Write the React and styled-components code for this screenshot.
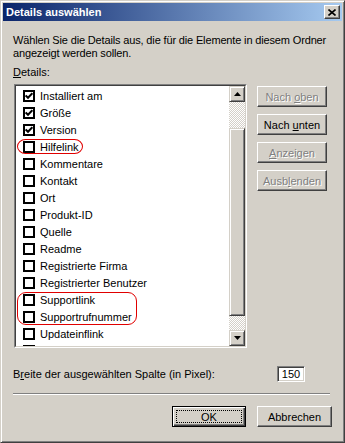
import React from 'react';
import styled, { createGlobalStyle, css } from 'styled-components';

const Global = createGlobalStyle`
  html, body { margin: 0; padding: 0; background: #D4D0C8; }
  body { font-family: "Liberation Sans", Arial, sans-serif; font-size: 11px; color: #000; }
  #root { width: 345px; height: 443px; }
`;

const FACE = '#D4D0C8';

const raisedOuter = css`
  border: 1px solid;
  border-color: ${FACE} #404040 #404040 ${FACE};
  box-shadow: inset 1px 1px #fff, inset -1px -1px #808080;
`;

const buttonBevel = css`
  border: 1px solid;
  border-color: #fff #404040 #404040 #fff;
  box-shadow: inset -1px -1px #808080;
`;

const Window = styled.div`
  box-sizing: border-box;
  width: 345px;
  height: 443px;
  ${raisedOuter};
  padding: 2px;
  display: flex;
  flex-direction: column;
  background: ${FACE};
`;

const TitleBar = styled.div`
  height: 18px;
  flex: none;
  display: flex;
  align-items: center;
  padding-left: 3px;
  background: linear-gradient(to right, #0A246A, #A6CAF0);
  color: #fff;
  font-weight: bold;
  font-size: 11px;
`;

const CloseButton = styled.div`
  box-sizing: border-box;
  width: 16px;
  height: 14px;
  margin-left: auto;
  margin-right: 2px;
  background: ${FACE};
  ${buttonBevel};
  display: flex;
  align-items: center;
  justify-content: center;
`;

const Content = styled.div`
  flex: 1;
  display: flex;
  flex-direction: column;
  padding: 13px 10px 13px 10px;
`;

const Text = styled.p`
  margin: ${p => p.$mt || 0}px 0 0 0;
  line-height: 13px;
  white-space: nowrap;
  letter-spacing: ${p => p.$ls || 0}px;
`;

const Main = styled.div`
  display: flex;
  align-items: flex-start;
  margin-top: 5px;
`;

const ListBox = styled.div`
  position: relative;
  box-sizing: border-box;
  margin-left: 1px;
  width: 233px;
  height: 264px;
  border: 1px solid;
  border-color: #808080 #fff #fff #808080;
`;

const ListInner = styled.div`
  box-sizing: border-box;
  height: 100%;
  border: 1px solid;
  border-color: #404040 ${FACE} ${FACE} #404040;
  display: flex;
`;

const Items = styled.div`
  flex: 1;
  background: #fff;
  overflow: hidden;
  padding-top: 1px;
`;

const Row = styled.div`
  height: 17px;
  display: flex;
  align-items: center;
  padding-left: 7px;
  gap: 5px;
  white-space: nowrap;
`;

const Box = styled.div`
  box-sizing: border-box;
  width: 12px;
  height: 12px;
  flex: none;
  border: 2px solid #000;
  background: #fff;
  display: flex;
  align-items: center;
  justify-content: center;
`;

const Scrollbar = styled.div`
  width: 16px;
  flex: none;
  display: flex;
  flex-direction: column;
`;

const ScrollBtn = styled.div`
  box-sizing: border-box;
  height: 16px;
  flex: none;
  background: ${FACE};
  ${raisedOuter};
  display: flex;
  align-items: center;
  justify-content: center;
`;

const Track = styled.div`
  height: ${p => p.$h}px;
  flex: none;
  background-color: ${FACE};
  background-image: conic-gradient(#fff 25%, ${FACE} 0 50%, #fff 0 75%, ${FACE} 0);
  background-size: 2px 2px;
`;

const Thumb = styled.div`
  box-sizing: border-box;
  flex: 1;
  background: ${FACE};
  ${raisedOuter};
`;

const Ring = styled.div`
  position: absolute;
  left: ${p => p.$x}px;
  top: ${p => p.$y}px;
  width: ${p => p.$w}px;
  height: ${p => p.$h}px;
  box-sizing: border-box;
  border: 1px solid #E00000;
  border-radius: ${p => p.$r};
  pointer-events: none;
`;

const SideButtons = styled.div`
  display: flex;
  flex-direction: column;
  gap: 7px;
  margin-left: 10px;
  padding-top: 2px;
`;

const Button = styled.div`
  position: relative;
  box-sizing: border-box;
  width: ${p => p.$w}px;
  height: 21px;
  background: ${FACE};
  display: flex;
  align-items: center;
  justify-content: center;
  white-space: nowrap;
  color: ${p => (p.$disabled ? '#808080' : '#000')};
  text-shadow: ${p => (p.$disabled ? '1px 1px 0 #fff' : 'none')};
  ${p =>
    p.$default
      ? css`
          border: 1px solid #000;
          box-shadow: inset 1px 1px #fff, inset -1px -1px #404040, inset -2px -2px #808080;
          &::after {
            content: '';
            position: absolute;
            inset: 3px;
            border: 1px dotted #000;
          }
        `
      : buttonBevel};
`;

const U = styled.span`
  text-decoration: underline;
  text-underline-offset: 1px;
`;

const WidthRow = styled.div`
  display: flex;
  align-items: center;
  margin-top: 18px;
  height: 16px;
`;

const WidthLabel = styled.span`
  width: 264px;
  white-space: nowrap;
`;

const NumberBox = styled.div`
  box-sizing: border-box;
  width: 28px;
  height: 16px;
  background: #fff;
  border: 1px solid;
  border-color: #808080 #fff #fff #808080;
  box-shadow: inset 1px 1px #404040, inset -1px -1px ${FACE};
  display: flex;
  align-items: center;
  justify-content: center;
`;

const Separator = styled.div`
  margin-top: 11px;
  margin-right: 2px;
  border-top: 1px solid #808080;
  border-bottom: 1px solid #fff;
`;

const Footer = styled.div`
  display: flex;
  justify-content: flex-end;
  gap: 11px;
  margin-top: 11px;
`;

const Check = () => (
  <svg width="8" height="8" viewBox="0 0 8 8">
    <path d="M0.6 3.4 L3 5.8 L7.4 1.2" fill="none" stroke="#000" strokeWidth="2" />
  </svg>
);

const Arrow = ({ down }) => (
  <svg width="7" height="4" viewBox="0 0 7 4">
    <path d={down ? 'M0 0 H7 L3.5 4 Z' : 'M0 4 H7 L3.5 0 Z'} fill="#000" />
  </svg>
);

const items = [
  ['Installiert am', true],
  ['Größe', true],
  ['Version', true],
  ['Hilfelink', false],
  ['Kommentare', false],
  ['Kontakt', false],
  ['Ort', false],
  ['Produkt-ID', false],
  ['Quelle', false],
  ['Readme', false],
  ['Registrierte Firma', false],
  ['Registrierter Benutzer', false],
  ['Supportlink', false],
  ['Supportrufnummer', false],
  ['Updateinflink', false],
  ['', false],
];

export default function App() {
  return (
    <>
      <Global />
      <Window>
        <TitleBar>
          Details auswählen
          <CloseButton>
            <svg width="8" height="7" viewBox="0 0 8 7">
              <path d="M0.5 0.5 L7.5 6.5 M7.5 0.5 L0.5 6.5" stroke="#000" strokeWidth="1.6" />
            </svg>
          </CloseButton>
        </TitleBar>
        <Content>
          <Text $ls={-0.15}>
            Wählen Sie die Details aus, die für die Elemente in diesem Ordner
            <br />
            angezeigt werden sollen.
          </Text>
          <Text $mt={6}>
            <U>D</U>etails:
          </Text>
          <Main>
            <ListBox>
              <ListInner>
                <Items>
                  {items.map(([label, checked], i) => (
                    <Row key={i}>
                      <Box>{checked && <Check />}</Box>
                      {label}
                    </Row>
                  ))}
                </Items>
                <Scrollbar>
                  <ScrollBtn>
                    <Arrow />
                  </ScrollBtn>
                  <Track $h={26} />
                  <Thumb />
                  <Track $h={14} />
                  <ScrollBtn>
                    <Arrow down />
                  </ScrollBtn>
                </Scrollbar>
              </ListInner>
              <Ring $x={2} $y={54} $w={66} $h={15} $r="9px / 8px" />
              <Ring $x={2} $y={207} $w={120} $h={33} $r="9px" />
            </ListBox>
            <SideButtons>
              <Button $w={70} $disabled>
                Nach&nbsp;<U>o</U>ben
              </Button>
              <Button $w={70}>
                Nach&nbsp;<U>u</U>nten
              </Button>
              <Button $w={70} $disabled>
                <U>A</U>nzeigen
              </Button>
              <Button $w={70} $disabled>
                Ausb<U>l</U>enden
              </Button>
            </SideButtons>
          </Main>
          <WidthRow>
            <WidthLabel>
              B<U>r</U>eite der ausgewählten Spalte (in Pixel):
            </WidthLabel>
            <NumberBox>150</NumberBox>
          </WidthRow>
          <Separator />
          <Footer>
            <Button $w={74} $default>
              OK
            </Button>
            <Button $w={75}>Abbrechen</Button>
          </Footer>
        </Content>
      </Window>
    </>
  );
}
